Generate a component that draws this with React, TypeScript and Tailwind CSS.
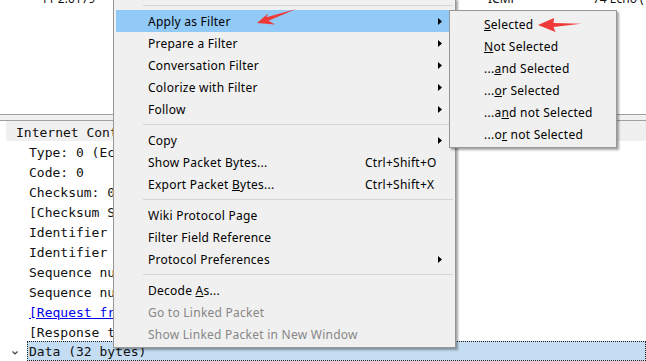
import React from "react";
import clsx from "clsx";

const uiFont = { fontFamily: '"Noto Sans", "Open Sans", sans-serif' };

const Item = ({
  children,
  shortcut,
  sub,
  active,
  disabled,
}: {
  children: React.ReactNode;
  shortcut?: string;
  sub?: boolean;
  active?: boolean;
  disabled?: boolean;
}) => {
  return (
    <div
      className={clsx(
        "flex h-[22px] items-center pl-[32px] pr-[11px] whitespace-nowrap",
        active && "bg-[#91c9f7]",
        disabled ? "text-[#878787]" : "text-black"
      )}
    >
      <span className="flex-1 pt-[2px] tracking-[0.25px]">{children}</span>
      {shortcut && <span className="w-[77px] pt-[2px] tracking-[0.25px]">{shortcut}</span>}
      {sub && (
        <svg width="4" height="7" viewBox="0 0 4 7">
          <path d="M0 0L4 3.5L0 7Z" fill="#000" />
        </svg>
      )}
    </div>
  );
};

const Sep = () => (
  <div className="h-[9px] pt-[4px] pl-[27px]">
    <div className="h-px bg-[#d5d5d5]" />
  </div>
);

const TreeRow = ({
  children,
  indent = true,
  className,
}: {
  children: React.ReactNode;
  indent?: boolean;
  className?: string;
}) => (
  <div
    className={clsx(
      "flex h-[20px] items-center whitespace-nowrap pt-[3px]",
      indent ? "pl-[29px]" : "pl-[10px]",
      className
    )}
  >
    {children}
  </div>
);

export default function App() {
  return (
    <div
      className="relative h-[361px] w-[646px] overflow-hidden bg-white text-[12px]"
      style={uiFont}
    >
      {/* packet list */}
      <div className="relative h-[114px] overflow-hidden bg-white">
        <div className="flex h-[16px] -mt-[9px] items-center text-[12px] text-[#111]">
          <span className="ml-[41px] w-[447px]">11 2.0179</span>
          <span className="w-[105px]">ICMP</span>
          <span>74 Echo (</span>
        </div>
      </div>
      <div className="h-px bg-[#a0a0a0]" />
      <div className="h-[5px] bg-[#f0f0f0]" />
      <div className="h-px bg-[#a0a0a0]" />

      {/* packet details */}
      <div
        className="text-[13px] text-[#111]"
        style={{ fontFamily: '"DejaVu Sans Mono", "Liberation Mono", monospace' }}
      >
        <div className="ml-[6px] bg-[#f0f0f0]">
          <TreeRow indent={false} className="pl-[4px]">
            Internet Control Message Protocol
          </TreeRow>
        </div>
        <TreeRow>Type: 0 (Echo (ping) reply)</TreeRow>
        <TreeRow>Code: 0</TreeRow>
        <TreeRow>Checksum: 0x4d5a [correct]</TreeRow>
        <TreeRow>[Checksum Status: Good]</TreeRow>
        <TreeRow>Identifier (BE): 1 (0x0001)</TreeRow>
        <TreeRow>Identifier (LE): 256 (0x0100)</TreeRow>
        <TreeRow>Sequence number (BE): 2 (0x0002)</TreeRow>
        <TreeRow>Sequence number (LE): 512 (0x0200)</TreeRow>
        <TreeRow>
          <span className="text-[#0000ee] underline">[Request frame: 11]</span>
        </TreeRow>
        <TreeRow>[Response time: 25.063 ms]</TreeRow>
        <div className="flex h-[20px] items-center">
          <svg className="ml-[12px] mr-[9px] mt-[3px]" width="6" height="4" viewBox="0 0 6 4">
            <path d="M0.5 0.5L3 3L5.5 0.5" stroke="#444" fill="none" strokeWidth="1.2" />
          </svg>
          <div className="flex h-[20px] flex-1 items-center border border-dotted border-[#222] bg-[#c4ddf3] pl-px pt-[2px]">
            Data (32 bytes)
          </div>
        </div>
      </div>

      {/* context menu */}
      <div className="absolute left-[113px] top-[-2px] z-10 w-[343px] border border-[#979797] bg-[#f0f0f0] p-[2px] shadow-[2px_2px_2px_rgba(0,0,0,0.35)]">
        <Sep />
        <Item sub active>
          Apply as Filter
        </Item>
        <Item sub>Prepare a Filter</Item>
        <Item sub>Conversation Filter</Item>
        <Item sub>Colorize with Filter</Item>
        <Item sub>Follow</Item>
        <Sep />
        <Item sub>Copy</Item>
        <Item shortcut="Ctrl+Shift+O">Show Packet Bytes...</Item>
        <Item shortcut="Ctrl+Shift+X">
          Export Packet <u>B</u>ytes...
        </Item>
        <Sep />
        <Item>Wiki Protocol Page</Item>
        <Item>Filter Field Reference</Item>
        <Item sub>Protocol Preferences</Item>
        <Sep />
        <Item>
          Decode <u>A</u>s...
        </Item>
        <Item disabled>Go to Linked Packet</Item>
        <Item disabled>Show Linked Packet in New Window</Item>
      </div>

      {/* submenu */}
      <div className="absolute left-[449px] top-[10px] z-20 w-[168px] border border-[#979797] bg-[#f0f0f0] p-[2px] shadow-[2px_2px_2px_rgba(0,0,0,0.35)]">
        <Item>
          <u>S</u>elected
        </Item>
        <Item>
          <u>N</u>ot Selected
        </Item>
        <Item>
          ...<u>a</u>nd Selected
        </Item>
        <Item>
          ...<u>o</u>r Selected
        </Item>
        <Item>
          ...a<u>n</u>d not Selected
        </Item>
        <Item>
          ...o<u>r</u> not Selected
        </Item>
      </div>

      {/* annotation arrows */}
      <svg className="absolute left-0 top-0 z-30" width="646" height="361" viewBox="0 0 646 361">
        <path
          d="M257 23L275 24.5L268.5 20.8L296 9L266.5 17.2L268 13.5Z"
          fill="#f03a3a"
        />
        <path
          d="M538 25L555.5 32L553.5 27L581 23.8L553.5 23L554 18Z"
          fill="#f03a3a"
        />
      </svg>
    </div>
  );
}
